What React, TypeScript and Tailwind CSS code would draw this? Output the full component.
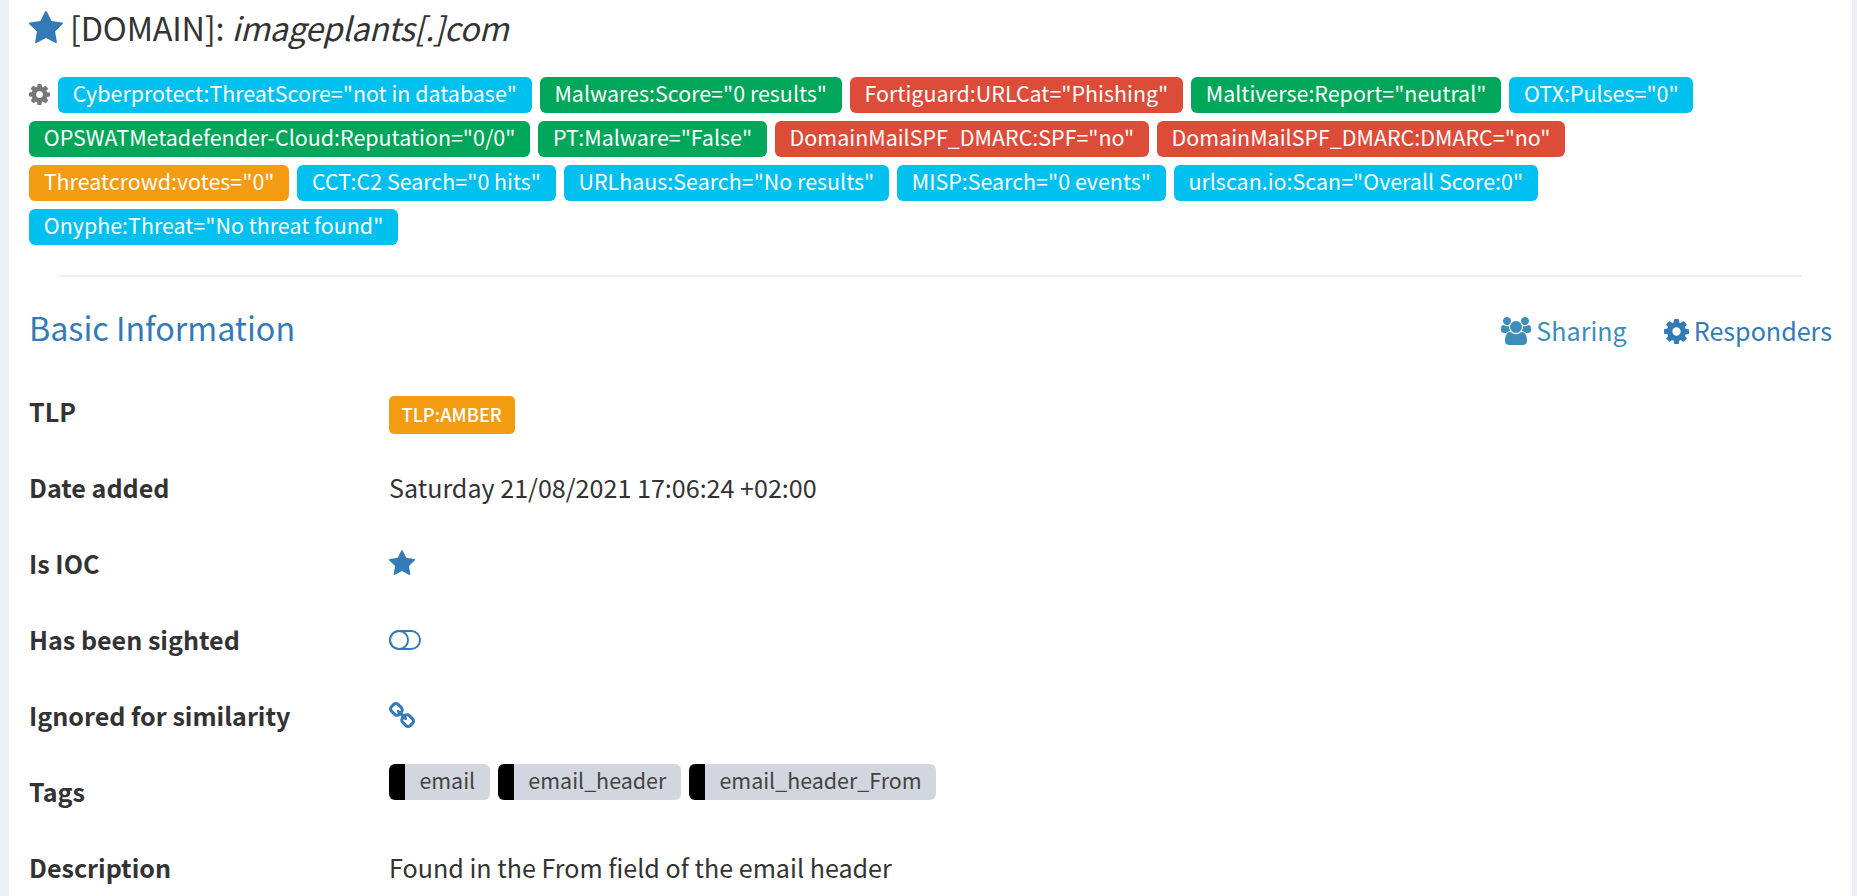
import type { ReactNode } from "react";

type IconProps = { className: string };

const StarIcon = ({ className }: IconProps) => (
  <svg viewBox="64 32 1664 1588" preserveAspectRatio="none" fill="currentColor" className={className}>
    <path d="M1728 647q0 22-26 48l-363 354 86 500q1 7 1 20 0 21-10.5 35.5t-30.5 14.5q-19 0-40-12l-449-236-449 236q-22 12-40 12-21 0-31.5-14.5t-10.5-35.5q0-6 2-20l86-500-364-354q-25-27-25-48 0-37 56-46l502-73 225-455q19-41 49-41t49 41l225 455 502 73q56 9 56 46z" />
  </svg>
);

const CogIcon = ({ className }: IconProps) => (
  <svg viewBox="128 128 1536 1536" fill="currentColor" className={className}>
    <path d="M1152 896q0-106-75-181t-181-75-181 75-75 181 75 181 181 75 181-75 75-181zm512-109v222q0 12-8 23t-20 13l-185 28q-19 54-39 91 35 50 107 138 10 12 10 25t-9 23q-27 37-99 108t-94 71q-12 0-26-9l-138-108q-44 23-91 38-16 136-29 186-7 28-36 28h-222q-14 0-24.5-8.5t-11.5-21.5l-28-184q-49-16-90-37l-141 107q-10 9-25 9-14 0-25-11-126-114-165-168-7-10-7-23 0-12 8-23 15-21 51-66.5t54-70.5q-27-50-41-99l-183-27q-13-2-21-12.5t-8-23.5v-222q0-12 8-23t19-13l186-28q14-46 39-92-40-57-107-138-10-12-10-24 0-10 9-23 26-36 98.5-107.5t94.5-71.5q13 0 26 10l138 107q44-23 91-38 16-136 29-186 7-28 36-28h222q14 0 24.5 8.5t11.5 21.5l28 184q49 16 90 37l142-107q9-9 24-9 13 0 25 10 129 119 165 170 7 8 7 22 0 12-8 23-15 21-51 66.5t-54 70.5q26 50 41 98l183 28q13 2 21 12.5t8 23.5z" />
  </svg>
);

const UsersIcon = ({ className }: IconProps) => (
  <svg viewBox="64 0 1920 1792" fill="currentColor" className={className}>
    <path d="M657 896q-162 5-265 128h-134q-82 0-138-40.5t-56-118.5q0-353 124-353 6 0 43.5 21t97.5 42.5 119 21.5q67 0 133-23-5 37-5 66 0 139 81 256zm1071 637q0 120-73 189.5t-194 69.5h-874q-121 0-194-69.5t-73-189.5q0-53 3.5-103.5t14-109 26.5-108.5 43-97.5 62-81 85.5-53.5 111.5-20q10 0 43 21.5t73 48 107 48 135 21.5 135-21.5 107-48 73-48 43-21.5q61 0 111.5 20t85.5 53.5 62 81 43 97.5 26.5 108.5 14 109 3.5 103.5zm-1024-1277q0 106-75 181t-181 75-181-75-75-181 75-181 181-75 181 75 75 181zm704 384q0 159-112.5 271.5t-271.5 112.5-271.5-112.5-112.5-271.5 112.5-271.5 271.5-112.5 271.5 112.5 112.5 271.5zm576 225q0 78-56 118.5t-138 40.5h-134q-103-123-265-128 81-117 81-256 0-29-5-66 66 23 133 23 59 0 119-21.5t97.5-42.5 43.5-21q124 0 124 353zm-128-609q0 106-75 181t-181 75-181-75-75-181 75-181 181-75 181 75 75 181z" />
  </svg>
);

const LinkIcon = ({ className }: IconProps) => (
  <svg viewBox="80 16 1632 1632" fill="currentColor" className={className}>
    <path d="M1520 1216q0-40-28-68l-208-208q-28-28-68-28-42 0-72 32 3 3 19 18.5t21.5 21.5 15 19 13 25.5 3.5 27.5q0 40-28 68t-68 28q-15 0-27.5-3.5t-25.5-13-19-15-21.5-21.5-18.5-19q-33 31-33 73 0 40 28 68l206 207q27 27 68 27 40 0 68-26l147-146q28-28 28-67zm-703-705q0-40-28-68l-206-207q-28-28-68-28-39 0-68 27l-147 146q-28 28-28 67 0 40 28 68l208 208q27 27 68 27 42 0 72-31-3-3-19-18.5t-21.5-21.5-15-19-13-25.5-3.5-27.5q0-40 28-68t68-28q15 0 27.5 3.5t25.5 13 19 15 21.5 21.5 18.5 19q33-31 33-73zm895 705q0 120-85 203l-147 146q-83 83-203 83-121 0-204-85l-206-207q-83-83-83-203 0-123 88-209l-88-88q-86 88-208 88-120 0-204-84l-208-208q-84-84-84-204t85-203l147-146q83-83 203-83 121 0 204 85l206 207q83 83 83 203 0 123-88 209l88 88q86-88 208-88 120 0 204 84l208 208q84 84 84 204z" />
  </svg>
);

const ToggleOffIcon = ({ className }: IconProps) => (
  <svg viewBox="0 0 32 20" fill="none" stroke="currentColor" strokeWidth="1.9" className={className}>
    <rect x="0.95" y="0.95" width="30.1" height="18.1" rx="9.05" />
    <circle cx="10" cy="10" r="9.05" />
  </svg>
);

const tones = {
  info: "bg-[#00c0ef]",
  safe: "bg-[#00a65a]",
  malicious: "bg-[#dd4b39]",
  suspicious: "bg-[#f39c12]",
};

type Report = { text: string; tone: keyof typeof tones };

const reports: Report[][] = [
  [
    { text: 'Cyberprotect:ThreatScore="not in database"', tone: "info" },
    { text: 'Malwares:Score="0 results"', tone: "safe" },
    { text: 'Fortiguard:URLCat="Phishing"', tone: "malicious" },
    { text: 'Maltiverse:Report="neutral"', tone: "safe" },
    { text: 'OTX:Pulses="0"', tone: "info" },
  ],
  [
    { text: 'OPSWATMetadefender-Cloud:Reputation="0/0"', tone: "safe" },
    { text: 'PT:Malware="False"', tone: "safe" },
    { text: 'DomainMailSPF_DMARC:SPF="no"', tone: "malicious" },
    { text: 'DomainMailSPF_DMARC:DMARC="no"', tone: "malicious" },
  ],
  [
    { text: 'Threatcrowd:votes="0"', tone: "suspicious" },
    { text: 'CCT:C2 Search="0 hits"', tone: "info" },
    { text: 'URLhaus:Search="No results"', tone: "info" },
    { text: 'MISP:Search="0 events"', tone: "info" },
    { text: 'urlscan.io:Scan="Overall Score:0"', tone: "info" },
  ],
  [{ text: 'Onyphe:Threat="No threat found"', tone: "info" }],
];

const Field = ({ label, children }: { label: string; children: ReactNode }) => (
  <div className="flex h-[76px] leading-[76px]">
    <dt className="w-[360px] shrink-0 font-bold tracking-[-0.01px]">{label}</dt>
    <dd className="flex">{children}</dd>
  </div>
);

const Tag = ({ name }: { name: string }) => (
  <span className="mt-[11px] h-9 rounded-[6px] border-l-[16px] border-black bg-[#d2d6de] pr-[14.8px] pl-[14.4px] text-[21.44px] leading-[31px] text-[#444]">
    {name}
  </span>
);

export default function App() {
  return (
    <div className="h-[896px] overflow-hidden bg-[#ecf0f5] pr-[5px] pl-[9px] font-['Noto_Sans_CJK_SC',sans-serif] text-[25.1px] text-[#333]">
      <main className="h-full bg-white pr-5 pl-5">
        <h1 className="flex h-[54px] text-[32.4px] leading-[54px] tracking-[-0.2px] whitespace-pre">
          <StarIcon className="mt-[11px] mr-[7px] h-8 w-[34px] text-[#337ab7]" />
          [DOMAIN]: <em className="tracking-[-0.38px]">imageplants[.]com</em>
        </h1>

        <section className="mt-[23px] flex flex-col gap-2">
          {reports.map((row, i) => (
            <div key={i} className="flex h-9 gap-2">
              {i === 0 && <CogIcon className="mt-[7px] h-[21px] w-[21px] text-[#777]" />}
              {row.map(({ text, tone }) => (
                <span
                  key={text}
                  className={`h-9 rounded-[6px] px-[14.75px] text-[21.44px] leading-[31px] whitespace-nowrap text-white ${tones[tone]}`}
                >
                  {text}
                </span>
              ))}
            </div>
          ))}
        </section>

        <hr className="mt-[30px] mr-[30px] ml-[30px] border-t-2 border-[#eee]" />

        <header className="flex h-[96px] justify-between text-[#337ab7]">
          <h2 className="text-[32.25px] leading-[100px]">Basic Information</h2>
          <nav className="flex gap-[37px] leading-[106px]">
            <a className="flex text-[#3c8dbc]">
              <UsersIcon className="mt-10 mr-[5px] h-7 w-[30px]" />
              Sharing
            </a>
            <a className="flex">
              <CogIcon className="mt-[42px] mr-[5px] h-[25px] w-[25px]" />
              Responders
            </a>
          </nav>
        </header>

        <dl>
          <Field label="TLP">
            <span className="mt-[23px] h-[38px] rounded-[5px] bg-[#f39c12] pr-[13.5px] pl-[12.5px] text-[18.3px] leading-[37px] font-medium text-white">
              TLP:AMBER
            </span>
          </Field>
          <Field label="Date added">Saturday 21/08/2021 17:06:24 +02:00</Field>
          <Field label="Is IOC">
            <StarIcon className="mt-[25px] h-[25px] w-[26px] text-[#337ab7]" />
          </Field>
          <Field label="Has been sighted">
            <ToggleOffIcon className="mt-[29px] h-5 w-8 text-[#337ab7]" />
          </Field>
          <Field label="Ignored for similarity">
            <LinkIcon className="mt-[25px] h-[26px] w-[26px] text-[#337ab7]" />
          </Field>
          <Field label="Tags">
            <div className="flex gap-2">
              <Tag name="email" />
              <Tag name="email_header" />
              <Tag name="email_header_From" />
            </div>
          </Field>
          <Field label="Description">Found in the From field of the email header</Field>
        </dl>
      </main>
    </div>
  );
}
